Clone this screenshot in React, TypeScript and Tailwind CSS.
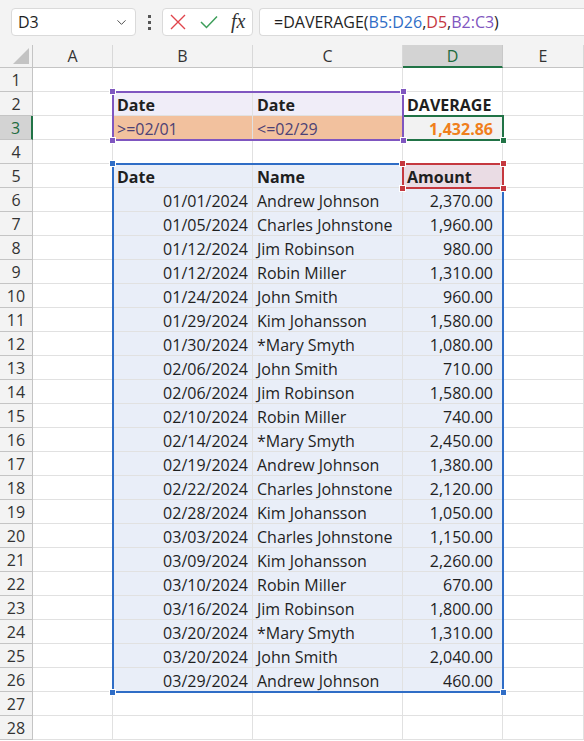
import { ChevronDown } from "lucide-react";

type Cell = {
  t?: string;
  right?: boolean;
  bold?: boolean;
  cls?: string;
};

const COLS = ["A", "B", "C", "D", "E"];

const DATA: [string, string, string][] = [
  ["01/01/2024", "Andrew Johnson", "2,370.00"],
  ["01/05/2024", "Charles Johnstone", "1,960.00"],
  ["01/12/2024", "Jim Robinson", "980.00"],
  ["01/12/2024", "Robin Miller", "1,310.00"],
  ["01/24/2024", "John Smith", "960.00"],
  ["01/29/2024", "Kim Johansson", "1,580.00"],
  ["01/30/2024", "*Mary Smyth", "1,080.00"],
  ["02/06/2024", "John Smith", "710.00"],
  ["02/06/2024", "Jim Robinson", "1,580.00"],
  ["02/10/2024", "Robin Miller", "740.00"],
  ["02/14/2024", "*Mary Smyth", "2,450.00"],
  ["02/19/2024", "Andrew Johnson", "1,380.00"],
  ["02/22/2024", "Charles Johnstone", "2,120.00"],
  ["02/28/2024", "Kim Johansson", "1,050.00"],
  ["03/03/2024", "Charles Johnstone", "1,150.00"],
  ["03/09/2024", "Kim Johansson", "2,260.00"],
  ["03/10/2024", "Robin Miller", "670.00"],
  ["03/16/2024", "Jim Robinson", "1,800.00"],
  ["03/20/2024", "*Mary Smyth", "1,310.00"],
  ["03/20/2024", "John Smith", "2,040.00"],
  ["03/29/2024", "Andrew Johnson", "460.00"],
];

const BLUE = "bg-[#e9eef8] border-[#d5dbe6]";

function buildRows(): Cell[][] {
  const rows: Cell[][] = [];
  for (let r = 1; r <= 28; r++) rows.push([{}, {}, {}, {}, {}]);
  const purple = "bg-[#f0edf8]";
  const orange = "bg-[#f2c19e] text-[#4d4275] border-[#b9a89a]";
  rows[1] = [
    {},
    { t: "Date", bold: true, cls: purple },
    { t: "Date", bold: true, cls: purple },
    { t: "DAVERAGE", bold: true },
    {},
  ];
  rows[2] = [
    {},
    { t: ">=02/01", cls: orange },
    { t: "<=02/29", cls: orange },
    { t: "1,432.86", bold: true, right: true, cls: "bg-[#f2f2f2] text-[#f07f1c] pr-[9px]" },
    {},
  ];
  rows[4] = [
    {},
    { t: "Date", bold: true, cls: BLUE },
    { t: "Name", bold: true, cls: BLUE },
    { t: "Amount", bold: true, cls: "bg-[#eadce4]" },
    {},
  ];
  DATA.forEach(([d, n, a], i) => {
    rows[5 + i] = [
      {},
      { t: d, right: true, cls: BLUE },
      { t: n, cls: BLUE },
      { t: a, right: true, cls: `${BLUE} pr-[9px]` },
      {},
    ];
  });
  return rows;
}

function Handle({ pos, color }: { pos: string; color: string }) {
  return <div className={`absolute w-[7px] h-[7px] border border-white ${color} ${pos}`} />;
}

export default function App() {
  const rows = buildRows();
  return (
    <div className="w-[584px] h-[741px] overflow-hidden bg-white font-['Open_Sans',sans-serif] text-[#1f1f1f]">
      {/* formula bar */}
      <div className="h-[45px] bg-[#f3f3f3] flex items-start pt-[8px]">
        <div className="ml-[11px] w-[125px] h-[28px] bg-white border border-[#dadada] rounded-[4px] flex items-center justify-between pl-[6px] pr-[6px]">
          <span className="text-[16px] leading-none">D3</span>
          <ChevronDown size={15} strokeWidth={1.5} className="text-[#444]" />
        </div>
        <div className="w-[26px] h-[28px] flex flex-col items-center justify-center gap-[3px]">
          <div className="w-[3px] h-[3px] bg-[#555]" />
          <div className="w-[3px] h-[3px] bg-[#555]" />
          <div className="w-[3px] h-[3px] bg-[#555]" />
        </div>
        <div className="w-[91px] h-[28px] bg-white border border-[#dadada] rounded-[4px] flex items-center pl-[6px] gap-[12px]">
          <svg width="18" height="18" viewBox="0 0 18 18">
            <path d="M2 2 L16 16 M16 2 L2 16" stroke="#e0444c" strokeWidth="1.4" fill="none" />
          </svg>
          <svg width="20" height="18" viewBox="0 0 20 18">
            <path d="M2 9 L7.5 14.5 L18 3.5" stroke="#3d9e5a" strokeWidth="1.5" fill="none" />
          </svg>
          <span className="font-['Liberation_Serif',serif] italic text-[20px] leading-none text-[#333] -mt-[2px]">
            fx
          </span>
        </div>
        <div className="ml-[6px] flex-1 h-[28px] bg-white border border-[#dadada] border-r-0 rounded-l-[4px] flex items-center pl-[14px] text-[16px]">
          <span>=DAVERAGE(</span>
          <span className="text-[#2f6dc6]">B5:D26</span>
          <span>,</span>
          <span className="text-[#c5383f]">D5</span>
          <span>,</span>
          <span className="text-[#7f56c0]">B2:C3</span>
          <span>)</span>
        </div>
      </div>

      {/* sheet */}
      <div className="relative">
        <div className="grid grid-cols-[33px_80px_140px_150px_100px_81px]">
          <div className="h-[23px] bg-[#f3f3f3] border-r border-b border-[#c4c4c4] relative">
            <svg className="absolute right-[3px] bottom-[3px]" width="16" height="16" viewBox="0 0 16 16">
              <polygon points="16,0 16,16 0,16" fill="#c3c3c3" />
            </svg>
          </div>
          {COLS.map((c) =>
            c === "D" ? (
              <div
                key={c}
                className="h-[23px] bg-[#d3d3d3] border-r border-[#c8c8c8] border-b-2 border-b-[#217346] flex items-center justify-center text-[16px] text-[#1e6b40]"
              >
                {c}
              </div>
            ) : (
              <div
                key={c}
                className="h-[23px] bg-[#f3f3f3] border-r border-b border-r-[#d8d8d8] border-b-[#c4c4c4] flex items-center justify-center text-[16px] text-[#333]"
              >
                {c}
              </div>
            )
          )}
          {rows.map((row, ri) => (
            <Row key={ri} n={ri + 1} row={row} />
          ))}
        </div>

        {/* range outlines */}
        <div className="absolute left-[112px] top-[118px] w-[392px] h-[530px] border-2 border-[#2f6dc6]">
          <Handle pos="-left-[5px] -top-[5px]" color="bg-[#2f6dc6]" />
          <Handle pos="-right-[5px] -top-[5px]" color="bg-[#2f6dc6]" />
          <Handle pos="-left-[5px] -bottom-[5px]" color="bg-[#2f6dc6]" />
          <Handle pos="-right-[5px] -bottom-[5px]" color="bg-[#2f6dc6]" />
        </div>
        <div className="absolute left-[402px] top-[118px] w-[102px] h-[26px] border-2 border-[#c5383f]">
          <Handle pos="-left-[5px] -top-[5px]" color="bg-[#c5383f]" />
          <Handle pos="-right-[5px] -top-[5px]" color="bg-[#c5383f]" />
          <Handle pos="-left-[5px] -bottom-[5px]" color="bg-[#c5383f]" />
          <Handle pos="-right-[5px] -bottom-[5px]" color="bg-[#c5383f]" />
        </div>
        <div className="absolute left-[402px] top-[70px] w-[102px] h-[26px] border-2 border-[#217346]">
          <Handle pos="-right-[5px] -bottom-[5px]" color="bg-[#217346]" />
        </div>
        <div className="absolute left-[112px] top-[46px] w-[292px] h-[50px] border-2 border-[#7f56c0]">
          <Handle pos="-left-[5px] -top-[5px]" color="bg-[#7f56c0]" />
          <Handle pos="-right-[5px] -top-[5px]" color="bg-[#7f56c0]" />
          <Handle pos="-left-[5px] -bottom-[5px]" color="bg-[#7f56c0]" />
          <Handle pos="-right-[5px] -bottom-[5px]" color="bg-[#7f56c0]" />
        </div>
      </div>
    </div>
  );
}

function Row({ n, row }: { n: number; row: Cell[] }) {
  const active = n === 3;
  return (
    <>
      <div
        className={
          active
            ? "h-[24px] bg-[#d3d3d3] border-b border-[#c4c4c4] border-r-2 border-r-[#217346] flex items-center justify-center text-[16px] text-[#1e6b40]"
            : "h-[24px] bg-[#f3f3f3] border-b border-r border-[#c4c4c4] flex items-center justify-center text-[16px] text-[#333]"
        }
      >
        {n}
      </div>
      {row.map((c, i) => (
        <div
          key={i}
          className={`h-[24px] border-r border-b border-[#e1e1e1] px-[4px] pt-[2px] leading-[22px] text-[16px] whitespace-nowrap overflow-hidden ${
            c.right ? "text-right" : "text-left"
          } ${c.bold ? "font-bold" : ""} ${c.cls ?? ""}`}
        >
          {c.t}
        </div>
      ))}
    </>
  );
}
